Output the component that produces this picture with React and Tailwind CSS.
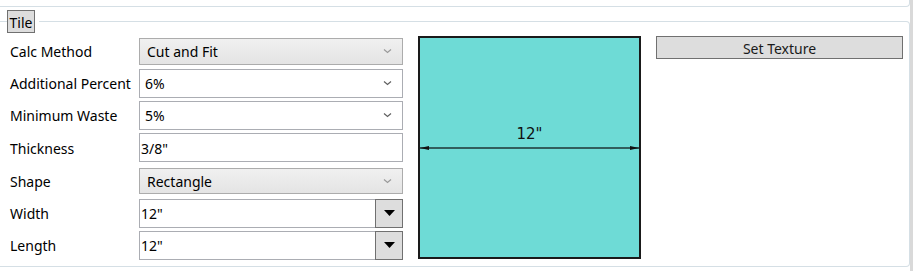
function Chevron({ color }) {
  return (
    <svg width="9" height="6" viewBox="0 0 9 6" className="shrink-0">
      <path d="M1 1.5 L4.5 4.5 L8 1.5" fill="none" stroke={color} strokeWidth="1.2" />
    </svg>
  );
}

function GrayCombo({ value, h }) {
  return (
    <div className={`${h} w-full flex items-center justify-between border border-[#acacac] bg-gradient-to-b from-[#f0f0f0] to-[#e4e4e4] pl-[7px] pr-[10px]`}>
      <span className="leading-none pt-[2px]">{value}</span>
      <Chevron color="#9a9a9a" />
    </div>
  );
}

function WhiteCombo({ value }) {
  return (
    <div className="h-[29px] w-full flex items-center justify-between border border-[#abadb3] bg-white pl-[5px] pr-[10px]">
      <span className="leading-none pt-[2px]">{value}</span>
      <Chevron color="#606060" />
    </div>
  );
}

function TextBox({ value }) {
  return (
    <div className="h-[29px] w-full flex items-center border border-[#abadb3] bg-white pl-[1px]">
      <span className="leading-none pt-[2px]">{value}</span>
    </div>
  );
}

function DropBox({ value }) {
  return (
    <div className="h-[29px] w-full flex">
      <div className="flex-1 flex items-center border border-r-0 border-[#abadb3] bg-white pl-[1px]">
        <span className="leading-none pt-[2px]">{value}</span>
      </div>
      <div className="w-[28px] flex items-center justify-center border border-[#707070] bg-[#dddddd]">
        <svg width="11" height="6" viewBox="0 0 11 6">
          <path d="M0 0 L11 0 L5.5 6 Z" fill="#000" />
        </svg>
      </div>
    </div>
  );
}

const rows = [
  { label: 'Calc Method', h: 'h-[32px]', el: <GrayCombo value="Cut and Fit" h="h-[27px]" /> },
  { label: 'Additional Percent', h: 'h-[32px]', el: <WhiteCombo value="6%" /> },
  { label: 'Minimum Waste', h: 'h-[32px]', el: <WhiteCombo value="5%" /> },
  { label: 'Thickness', h: 'h-[33px]', el: <TextBox value={'3/8"'} /> },
  { label: 'Shape', h: 'h-[33px]', el: <GrayCombo value="Rectangle" h="h-[26px]" /> },
  { label: 'Width', h: 'h-[32px]', el: <DropBox value={'12"'} /> },
  { label: 'Length', h: 'h-[32px]', el: <DropBox value={'12"'} /> },
];

export default function App() {
  return (
    <div className="w-[915px] h-[271px] bg-white overflow-hidden flex text-[14px] text-black" style={{ fontFamily: '"Noto Sans", sans-serif' }}>
      <div className="w-[910px] flex flex-col">
        <div className="h-[7px] w-[910px] border-b border-r border-[#d5dfe5] rounded-br-[4px]" />
        <fieldset className="mt-[3px] h-[257px] w-[910px] border border-l-0 border-[#d5dfe5] rounded-r-[4px] pl-[7px] pt-[2px] m-0">
          <legend className="p-0 pr-[4px]">
            <div className="h-[23px] w-[28px] flex items-center justify-center bg-[#dddddd] border border-[#707070] leading-none pt-[2px]">Tile</div>
          </legend>
          <div className="flex">
            <div className="flex flex-col w-[396px]">
              {rows.map((r) => (
                <div key={r.label} className={`${r.h} flex items-center`}>
                  <div className="w-[132px] pl-[3px] leading-none whitespace-nowrap pt-[2px]">{r.label}</div>
                  <div className="w-[264px] flex items-center">{r.el}</div>
                </div>
              ))}
            </div>
            <div className="ml-[15px] mt-[1px] w-[223px] h-[223px] shrink-0 border-2 border-[#1a1a1a] bg-[#6edbd6] flex flex-col">
              <div className="h-[110px] flex flex-col justify-end">
                <div className="text-center leading-none text-[15px] text-[#111] mb-[3px]" style={{ fontFamily: '"DejaVu Sans", sans-serif' }}>12"</div>
                <svg width="219" height="6" viewBox="0 0 219 6" className="block -mb-[3px]">
                  <line x1="0" y1="3" x2="219" y2="3" stroke="#1e3535" strokeWidth="1.5" />
                  <path d="M0 3 L9 1 L9 5 Z" fill="#111" />
                  <path d="M219 3 L210 1 L210 5 Z" fill="#111" />
                </svg>
              </div>
            </div>
            <div className="ml-[15px] mt-[1px] w-[247px] shrink-0">
              <div className="h-[23px] w-full flex items-center justify-center bg-[#dddddd] border border-[#707070] text-[#1a1a1a] leading-none pt-[2px]">Set Texture</div>
            </div>
          </div>
        </fieldset>
      </div>
      <div className="w-[3px] h-full bg-[#d9d9d9]" />
    </div>
  );
}
